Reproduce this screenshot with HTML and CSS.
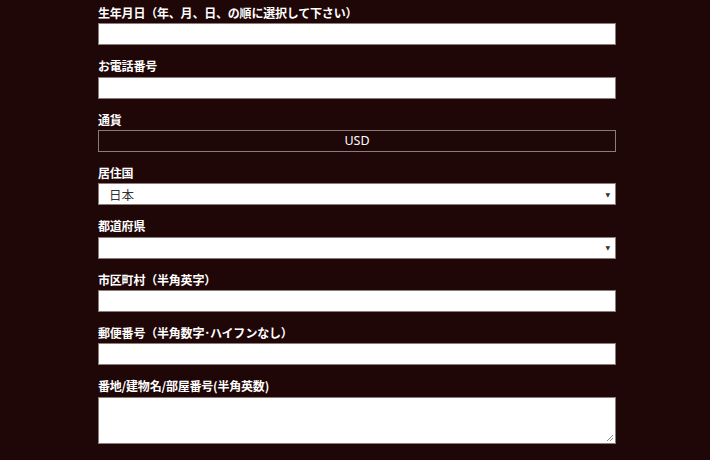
FILE: index.html
```html
<!DOCTYPE html>
<html lang="ja">
<head>
<meta charset="utf-8">
<link rel="stylesheet" href="styles.css">
</head>
<body>
<form class="form">
  <div class="field">
    <label class="label">生年月日（年、月、日、の順に選択して下さい）</label>
    <div class="input"></div>
  </div>
  <div class="field">
    <label class="label">お電話番号</label>
    <div class="input"></div>
  </div>
  <div class="field">
    <label class="label">通貨</label>
    <div class="readonly">USD</div>
  </div>
  <div class="field">
    <label class="label">居住国</label>
    <div class="input select"><span class="value">日本</span><span class="arrow">▼</span></div>
  </div>
  <div class="field">
    <label class="label">都道府県</label>
    <div class="input select"><span class="value"></span><span class="arrow">▼</span></div>
  </div>
  <div class="field">
    <label class="label">市区町村（半角英字）</label>
    <div class="input"></div>
  </div>
  <div class="field">
    <label class="label">郵便番号（半角数字･ハイフンなし）</label>
    <div class="input"></div>
  </div>
  <div class="field">
    <label class="label">番地/建物名/部屋番号(半角英数)</label>
    <div class="input textarea">
      <svg class="grip" width="8" height="8" viewBox="0 0 8 8"><path d="M7 1L1 7M7 4L4 7" stroke="#8a8a8a" stroke-width="1"/></svg>
    </div>
  </div>
</form>
</body>
</html>
```
FILE: styles.css
```css
html, body {
  margin: 0;
  padding: 0;
  background: #1f0607;
  width: 710px;
  height: 460px;
  overflow: hidden;
}
.form {
  padding: 4px 0 0 98px;
  width: 518px;
  font-family: "Noto Sans CJK JP", "Noto Sans", sans-serif;
}
.field {
  display: flex;
  flex-direction: column;
  margin-bottom: 12px;
}
.label {
  color: #ffffff;
  font-weight: bold;
  font-size: 12px;
  line-height: 18.33px;
  margin-bottom: 1px;
  letter-spacing: -0.2px;
}
.input {
  box-sizing: border-box;
  height: 22px;
  background: #ffffff;
  border: 1px solid #8b7b79;
  position: relative;
}
.readonly {
  box-sizing: border-box;
  height: 22px;
  border: 1px solid #8b7b79;
  color: #ffffff;
  font-family: "Noto Sans", sans-serif;
  font-size: 12.5px;
  line-height: 20px;
  text-align: center;
}
.select {
  display: flex;
  align-items: center;
  justify-content: space-between;
  padding: 0 5px 0 10px;
}
.value {
  color: #333333;
  font-size: 12.5px;
  font-family: "Noto Sans CJK JP", sans-serif;
}
.arrow {
  color: #333333;
  font-size: 6px;
  font-family: "DejaVu Sans", sans-serif;
}
.textarea {
  height: 47px;
}
.grip {
  position: absolute;
  right: 1px;
  bottom: 1px;
}
```
